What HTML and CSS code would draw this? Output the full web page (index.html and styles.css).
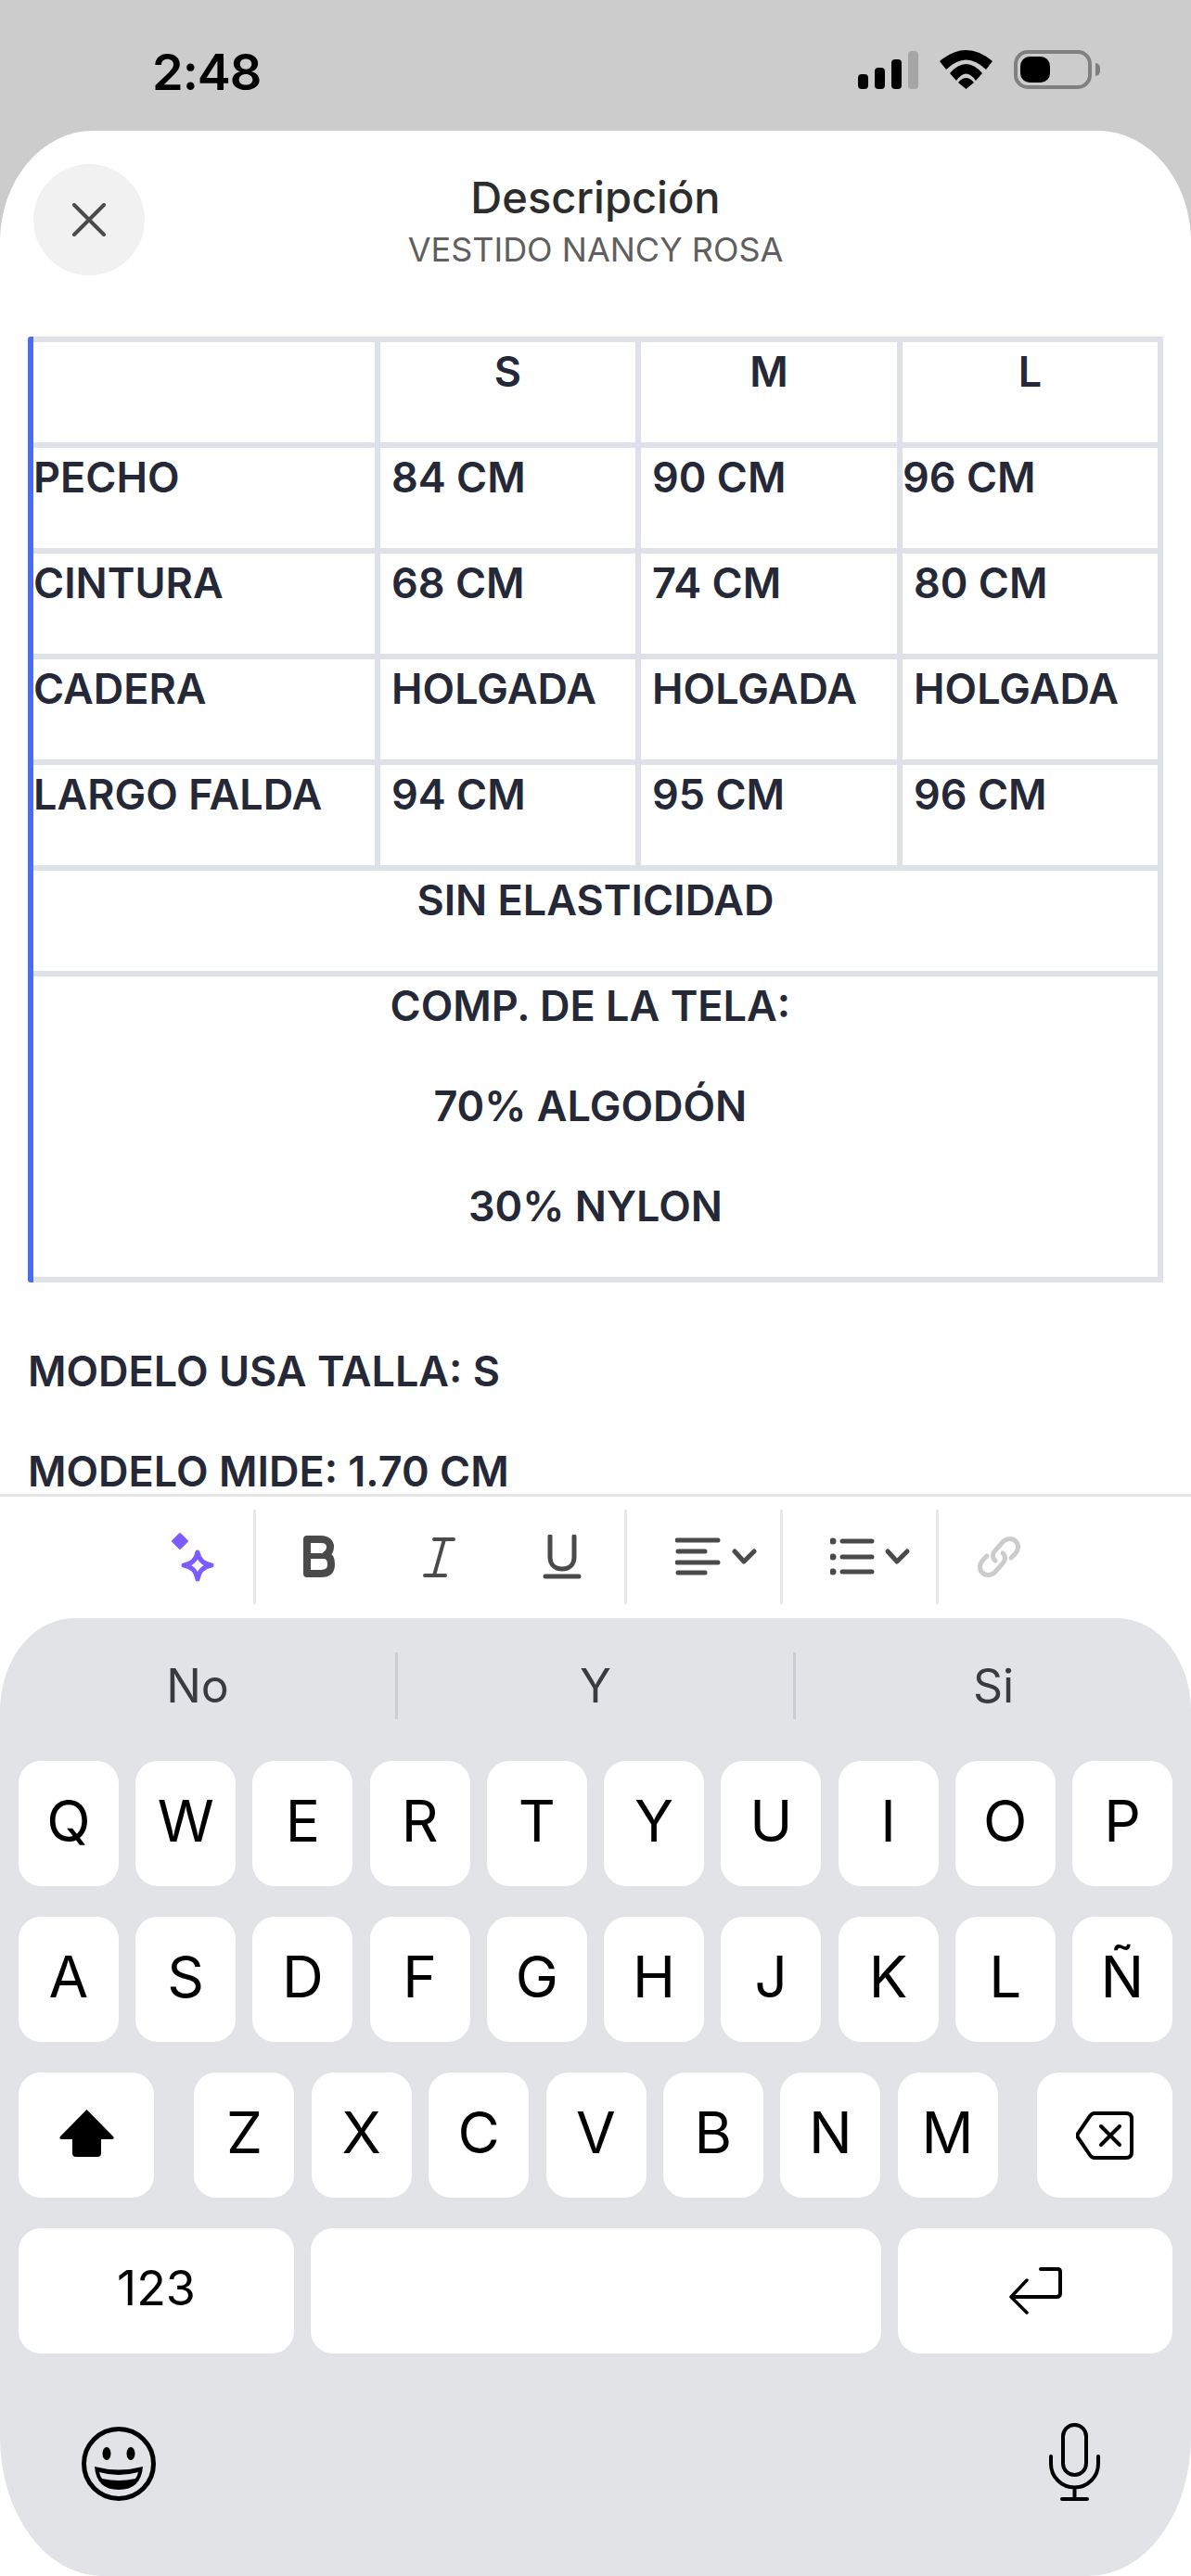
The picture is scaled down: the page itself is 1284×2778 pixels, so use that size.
FILE: index.html
```html
<!DOCTYPE html>
<html lang="es">
<head>
  <meta charset="UTF-8" />
  <title>Descripción</title>
  <link rel="stylesheet" href="styles.css">
</head>
<body>
  <div class="status-bar">
    <span class="time">2:48</span>
    <div class="status-icons">
      <div class="signal">
        <i class="bar bar1"></i><i class="bar bar2"></i><i class="bar bar3"></i><i class="bar bar4"></i>
      </div>
      <svg class="wifi" width="57" height="42" viewBox="0 0 57 42">
        <path d="M0 12Q28.500 -12 57 12L50 21Q28.500 0 7 21Z"/>
        <path d="M11 25Q28.500 5 46 25L39 33Q28.500 18 18 33Z"/>
        <path d="M20 35Q28.500 25 37 35L28.500 42Z"/>
      </svg>
      <div class="battery"><i class="battery-fill"></i></div>
      <i class="battery-nub"></i>
    </div>
  </div>

  <div class="sheet">
    <div class="sheet-header">
      <button class="close-btn">
        <svg width="36" height="36" viewBox="0 0 36 36"><path d="M2 2L34 34M34 2L2 34" stroke="#4a4a4a" stroke-width="4" stroke-linecap="round"/></svg>
      </button>
      <div class="sheet-title">
        <div class="title">Descripción</div>
        <div class="subtitle">VESTIDO NANCY ROSA</div>
      </div>
      <div class="header-spacer"></div>
    </div>

    <div class="content">
      <div class="table-wrap">
        <table class="size-table">
          <tr><td class="c1"></td><td class="c2 center"><p>S</p></td><td class="c3 center"><p>M</p></td><td class="c4 center"><p>L</p></td></tr>
          <tr><td><p>PECHO</p></td><td class="ind"><p>84 CM</p></td><td class="ind"><p>90 CM</p></td><td><p>96 CM</p></td></tr>
          <tr><td><p>CINTURA</p></td><td class="ind"><p>68 CM</p></td><td class="ind"><p>74 CM</p></td><td class="ind"><p>80 CM</p></td></tr>
          <tr><td><p>CADERA</p></td><td class="ind"><p>HOLGADA</p></td><td class="ind"><p>HOLGADA</p></td><td class="ind"><p>HOLGADA</p></td></tr>
          <tr><td><p>LARGO FALDA</p></td><td class="ind"><p>94 CM</p></td><td class="ind"><p>95 CM</p></td><td class="ind"><p>96 CM</p></td></tr>
          <tr><td colspan="4" class="center"><p>SIN ELASTICIDAD</p></td></tr>
          <tr><td colspan="4" class="center"><p>COMP. DE LA TELA:&nbsp;</p><p>70% ALGODÓN&nbsp;</p><p>30% NYLON</p></td></tr>
        </table>
      </div>
      <div class="notes">
        <p>MODELO USA TALLA: S</p>
        <p>MODELO MIDE: 1.70 CM</p>
      </div>
    </div>

    <div class="toolbar">
      <div class="tool-group group-ai">
        <svg width="50" height="54" viewBox="0 0 50 54">
          <path d="M10 2L18 10L10 18L2 10Z" fill="#7c5cff" stroke="#7c5cff" stroke-width="2" stroke-linejoin="round"/>
          <path d="M29 22Q31 34 44 36Q31 38 29 51Q27 38 14 36Q27 34 29 22Z" fill="none" stroke="#7c5cff" stroke-width="5" stroke-linejoin="round"/>
        </svg>
      </div>
      <div class="tool-group group-format">
        <svg width="36" height="46" viewBox="0 0 36 46">
          <path d="M4 4H19C26 4 29 8 29 12C29 16 27 19 24 21C28 22 30 26 30 31C30 38 26 41 19 41H4Z" fill="none" stroke="#4a4a4a" stroke-width="8" stroke-linejoin="round"/>
          <path d="M4 22H23" stroke="#4a4a4a" stroke-width="6"/>
        </svg>
        <svg width="36" height="46" viewBox="0 0 36 46">
          <path d="M12 4H33M2 43H24M23 4L12 43" fill="none" stroke="#4a4a4a" stroke-width="4" stroke-linecap="round"/>
        </svg>
        <svg width="42" height="48" viewBox="0 0 42 48">
          <path d="M8 2V24C8 32 13 37 21 37C29 37 34 32 34 24V2" fill="none" stroke="#4a4a4a" stroke-width="5" stroke-linecap="round"/>
          <path d="M3 45H39" stroke="#4a4a4a" stroke-width="5" stroke-linecap="round"/>
        </svg>
      </div>
      <div class="tool-group group-align">
        <svg width="88" height="42" viewBox="0 0 88 42">
          <path d="M2 3H46M3 15H32M2 27H46M3 38H32" stroke="#4a4a4a" stroke-width="5" stroke-linecap="round"/>
          <path d="M64 15L74 26L85 15" fill="none" stroke="#4a4a4a" stroke-width="5" stroke-linecap="round" stroke-linejoin="round"/>
        </svg>
      </div>
      <div class="tool-group group-list">
        <svg width="88" height="42" viewBox="0 0 88 42">
          <circle cx="3" cy="4" r="3.500" fill="#4a4a4a"/><circle cx="3" cy="21" r="3.500" fill="#4a4a4a"/><circle cx="3" cy="37" r="3.500" fill="#4a4a4a"/>
          <path d="M13 4H45M13 21H45M13 37H45" stroke="#4a4a4a" stroke-width="5" stroke-linecap="round"/>
          <path d="M62 15L72 26L83 15" fill="none" stroke="#4a4a4a" stroke-width="5" stroke-linecap="round" stroke-linejoin="round"/>
        </svg>
      </div>
      <div class="tool-group group-link">
        <svg width="48" height="48" viewBox="0 0 48 48">
          <path d="M20 28C16 24 17 20 20 17L28 8C32 4 38 3 42 7C46 11 45 17 41 21L37 25" fill="none" stroke="#cccccc" stroke-width="5" stroke-linecap="round"/>
          <path d="M28 20C32 24 31 28 28 31L20 40C16 44 10 45 6 41C2 37 3 31 7 27L11 23" fill="none" stroke="#cccccc" stroke-width="5" stroke-linecap="round"/>
        </svg>
      </div>
    </div>
  </div>

  <div class="keyboard-back">
  <div class="keyboard">
    <div class="suggestions">
      <div class="suggestion">No</div>
      <div class="suggestion">Y</div>
      <div class="suggestion last">Si</div>
    </div>
    <div class="key-row">
      <div class="key">Q</div><div class="key">W</div><div class="key">E</div><div class="key">R</div><div class="key">T</div><div class="key">Y</div><div class="key">U</div><div class="key">I</div><div class="key">O</div><div class="key">P</div>
    </div>
    <div class="key-row">
      <div class="key">A</div><div class="key">S</div><div class="key">D</div><div class="key">F</div><div class="key">G</div><div class="key">H</div><div class="key">J</div><div class="key">K</div><div class="key">L</div><div class="key">Ñ</div>
    </div>
    <div class="key-row">
      <div class="key key-shift">
        <svg width="61" height="52" viewBox="0 0 61 52"><path d="M30.500 1L59 30Q61 33 57 33H46V48Q46 52 42 52H19Q15 52 15 48V33H4Q0 33 2 30Z"/></svg>
      </div>
      <div class="key">Z</div><div class="key">X</div><div class="key">C</div><div class="key">V</div><div class="key">B</div><div class="key">N</div><div class="key">M</div>
      <div class="key key-delete">
        <svg width="62" height="52" viewBox="0 0 62 52">
          <path d="M20 2H54Q60 2 60 8V44Q60 50 54 50H20Q17 50 15 47L2 28Q1 26 2 24L15 5Q17 2 20 2Z" fill="none" stroke="#000" stroke-width="4"/>
          <path d="M27 16L47 36M47 16L27 36" stroke="#000" stroke-width="4" stroke-linecap="round"/>
        </svg>
      </div>
    </div>
    <div class="key-row">
      <div class="key key-num">123</div>
      <div class="key key-space"></div>
      <div class="key key-return">
        <svg width="57" height="51" viewBox="0 0 57 51">
          <path d="M34 2H52Q55 2 55 5V28Q55 32 51 32H3" fill="none" stroke="#000" stroke-width="4" stroke-linecap="round"/>
          <path d="M19 14L2 32L19 49" fill="none" stroke="#000" stroke-width="3.500" stroke-linecap="round" stroke-linejoin="round"/>
        </svg>
      </div>
    </div>
    <div class="keyboard-bottom">
      <svg width="80" height="80" viewBox="0 0 80 80">
        <circle cx="40" cy="40" r="37.500" fill="none" stroke="#000" stroke-width="5"/>
        <ellipse cx="27" cy="29" rx="4.500" ry="7"/><ellipse cx="53" cy="29" rx="4.500" ry="7"/>
        <path d="M14 43Q40 50 66 43Q64 68 40 68Q16 68 14 43Z"/>
        <path d="M19 49Q40 55 61 49Q60 54 58 56Q40 60 22 56Q20 54 19 49Z" fill="#e2e3e7"/>
      </svg>
      <svg width="55" height="84" viewBox="0 0 55 84">
        <rect x="15" y="2" width="25" height="54" rx="12.500" fill="none" stroke="#000" stroke-width="4"/>
        <path d="M2 36V44A25.500 25.500 0 0 0 53 44V36M27.500 70V82M14 82H41" fill="none" stroke="#000" stroke-width="4" stroke-linecap="round"/>
      </svg>
    </div>
  </div>
  </div>
</body>
</html>
```

FILE: styles.css
```css
* {
  box-sizing: border-box;
}

html, body {
  margin: 0;
  padding: 0;
}

body {
  width: 1284px;
  height: 2778px;
  overflow: hidden;
  background-color: #cccccc;
  font-family: Inter, "Noto Sans", sans-serif;
  display: flex;
  flex-direction: column;
}

/* Status bar */
.status-bar {
  height: 141px;
  flex: none;
  display: flex;
  align-items: flex-start;
  justify-content: space-between;
  padding: 45px 98px 0 164px;
}

.time {
  font-size: 54px;
  line-height: 66px;
  font-weight: 600;
  letter-spacing: -1px;
  color: #000;
}

.status-icons {
  display: flex;
  align-items: flex-start;
  padding-top: 9px;
}

.signal {
  display: flex;
  align-items: flex-end;
  gap: 7px;
  height: 42px;
  margin-right: 23px;
}

.bar {
  display: block;
  width: 11px;
  border-radius: 4px;
  background-color: #000;
}
.bar1 { height: 16px; }
.bar2 { height: 23px; }
.bar3 { height: 32px; }
.bar4 { height: 41px; background-color: #a6a6a6; }

.wifi {
  margin-right: 23px;
}

.battery {
  width: 84px;
  height: 42px;
  border: 4px solid #808080;
  border-radius: 15px;
  padding: 3px;
}

.battery-fill {
  display: block;
  width: 32px;
  height: 100%;
  border-radius: 10px;
  background-color: #000;
}

.battery-nub {
  display: block;
  width: 5px;
  height: 14px;
  margin: 14px 0 0 4px;
  border-radius: 0 7px 7px 0;
  background-color: #808080;
}

/* White sheet */
.sheet {
  flex: none;
  height: 1604px;
  background-color: #fff;
  border-radius: 100px 100px 0 0 / 120px 120px 0 0;
  display: flex;
  flex-direction: column;
  overflow: hidden;
}

.sheet-header {
  flex: none;
  display: flex;
  align-items: flex-start;
  padding: 36px 36px 0;
  height: 222px;
}

.close-btn {
  width: 120px;
  height: 120px;
  flex: none;
  border: none;
  border-radius: 50%;
  background-color: #f1f1f1;
  padding: 0;
  display: flex;
  align-items: center;
  justify-content: center;
}

.header-spacer {
  width: 120px;
  flex: none;
}

.sheet-title {
  flex: 1;
  text-align: center;
}

.title {
  font-size: 47px;
  line-height: 56px;
  font-weight: 500;
  color: #2c2c2c;
  margin-top: 8px;
}

.subtitle {
  font-size: 36px;
  line-height: 50px;
  margin-top: 3px;
  color: #5f5f5f;
}

.content {
  flex: 1;
  min-height: 0;
  padding: 0 30px;
  color: #252836;
  font-size: 45px;
  line-height: 62px;
  font-weight: 600;
}

.content p {
  margin: 0 0 45px 0;
  padding-top: 1px;
}

.content .notes p:last-child {
  margin-bottom: 0;
}

/* Size table */
.table-wrap {
  border-left: 6px solid #4a6cf0;
  border-radius: 3px;
}

.size-table {
  width: 1218px;
  table-layout: fixed;
  border-collapse: separate;
  border-spacing: 0;
  border-top: 6px solid #dee2e8;
}

.size-table td {
  border-right: 6px solid #dee2e8;
  border-bottom: 6px solid #dee2e8;
  padding: 0;
  vertical-align: top;
  height: 114px;
}

.size-table .c1 { width: 374px; }
.size-table .c2 { width: 281px; }
.size-table .c3 { width: 282px; }
.size-table .c4 { width: 281px; }

.size-table .ind {
  padding-left: 12px;
}

.size-table .center {
  text-align: center;
}

.notes {
  margin-top: 64px;
}

/* Formatting toolbar */
.toolbar {
  flex: none;
  height: 134px;
  border-top: 3px solid #e5e5e5;
  background-color: #fff;
  display: flex;
  align-items: center;
  padding: 14px 0 15px 0;
}

.tool-group {
  height: 100%;
  display: flex;
  align-items: center;
  border-right: 3px solid #e8e8e8;
}

.group-ai {
  width: 276px;
  padding-left: 184px;
}

.group-format {
  width: 400px;
  padding-left: 51px;
  gap: 93px;
}

.group-align {
  width: 168px;
  padding-left: 52px;
}

.group-list {
  width: 168px;
  padding-left: 51px;
}

.group-link {
  border-right: none;
  padding-left: 41px;
}

/* Keyboard */
.keyboard-back {
  flex: none;
  background-color: #fff;
}

.keyboard {
  height: 1033px;
  background-color: #e2e3e7;
  border-radius: 80px 80px 110px 110px / 100px 100px 150px 150px;
  padding-top: 37px;
}

.suggestions {
  display: flex;
  height: 72px;
  margin-bottom: 45px;
}

.suggestion {
  flex: 1;
  text-align: center;
  font-size: 50px;
  line-height: 72px;
  color: #3a3b40;
  border-right: 3px solid #cccdd2;
}

.suggestion.last {
  border-right: none;
}

.key-row {
  display: flex;
  justify-content: space-between;
  padding: 0 20px;
  margin-bottom: 33px;
}

.key {
  width: 108px;
  height: 135px;
  flex: none;
  background-color: #fff;
  border-radius: 24px;
  display: flex;
  align-items: center;
  justify-content: center;
  font-size: 62px;
  color: #000;
  padding-bottom: 6px;
}

.key-shift { width: 146px; margin-right: 25px; }
.key-delete { width: 146px; margin-left: 24px; padding-bottom: 0; }
.key-num { width: 297px; font-size: 52px; }
.key-space { width: 615px; }
.key-return { width: 296px; padding-bottom: 0; }

.keyboard-bottom {
  display: flex;
  justify-content: space-between;
  align-items: flex-end;
  padding: 42px 98px 0 88px;
}
```
